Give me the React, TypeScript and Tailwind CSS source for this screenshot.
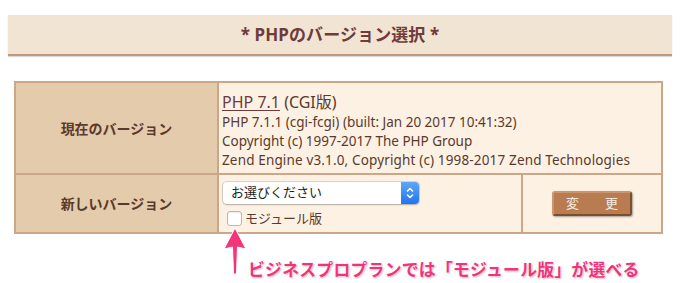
import { useState } from 'react';

const jp = "font-['Noto_Sans','Noto_Sans_CJK_JP',sans-serif]";

export default function App() {
  const [modular, setModular] = useState(false);

  return (
    <div className={`relative w-[680px] h-[283px] bg-white overflow-hidden ${jp}`}>
      {/* Title band */}
      <div className="pt-[15px] px-[8px]">
        <div className="h-[41px] flex items-center justify-center bg-[#f1e4d3] border-b-2 border-[#bf9b7c] shadow-[0_1px_1px_rgba(0,0,0,0.15)]">
          <h1 className="text-[17px] font-bold text-[#6f3b3b] tracking-[0.1px]">* PHPのバージョン選択 *</h1>
        </div>
      </div>

      {/* Version table */}
      <div className="mt-[25px] ml-[14px] w-[649px] grid grid-cols-[201px_302px_138px] border-2 border-[#c9a788] bg-[#c9a788] gap-[2px]">
        <div className="h-[90px] bg-[#e4cbab] flex items-center justify-center text-[14px] font-semibold text-[#5a3a2c]">
          現在のバージョン
        </div>
        <div className="col-span-2 bg-[#fdf1e4] pl-[3px] pt-[8px] text-[13.5px] leading-[19px] text-[#5a3a2c]">
          <div className="text-[16px] leading-[22px]">
            <span className="underline text-[#6f3b3b] decoration-1 underline-offset-2">PHP 7.1</span> (CGI版)
          </div>
          <div>PHP 7.1.1 (cgi-fcgi) (built: Jan 20 2017 10:41:32)</div>
          <div>Copyright (c) 1997-2017 The PHP Group</div>
          <div className="tracking-[0.15px]">Zend Engine v3.1.0, Copyright (c) 1998-2017 Zend Technologies</div>
        </div>

        <div className="h-[57px] bg-[#e4cbab] flex items-center justify-center text-[14px] font-semibold text-[#5a3a2c]">
          新しいバージョン
        </div>
        <div className="bg-[#fdf1e4] pl-[4px] pt-[7px]">
          <div className="w-[196px] h-[22px] flex items-center bg-white rounded-[4px] shadow-[0_0_0_1px_rgba(0,0,0,0.12),0_1px_2px_rgba(0,0,0,0.2)] overflow-hidden">
            <span className="flex-1 pl-[8px] text-[13px] text-[#222]">お選びください</span>
            <span className="w-[18px] h-full bg-gradient-to-b from-[#5ea8f8] to-[#1f74ef] flex items-center justify-center">
              <svg width="8" height="14" viewBox="0 0 8 14" fill="none" stroke="white" strokeWidth="1.6" strokeLinecap="round" strokeLinejoin="round">
                <path d="M1.5 5 L4 2.5 L6.5 5" />
                <path d="M1.5 9 L4 11.5 L6.5 9" />
              </svg>
            </span>
          </div>
          <label className="mt-[5px] flex items-center gap-[3px] text-[13px] text-[#5a3a2c] cursor-pointer">
            <input
              type="checkbox"
              checked={modular}
              onChange={() => setModular(!modular)}
              className="appearance-none w-[15px] h-[15px] ml-[4px] rounded-[3px] bg-white border border-[#b8b8b8] shadow-[inset_0_1px_1px_rgba(0,0,0,0.08)]"
            />
            モジュール版
          </label>
        </div>
        <div className="bg-[#fdf1e4] flex items-center justify-center">
          <button className="w-[80px] h-[25px] whitespace-nowrap rounded-[3px] bg-[#b87c50] border-2 border-[#7d4d2d] border-t-[#c99670] border-l-[#c99670] shadow-[1px_1px_2px_rgba(0,0,0,0.35)] text-[13px] text-[#f6ebe0]">
            変　　更
          </button>
        </div>
      </div>

      {/* Annotation arrow */}
      <svg className="absolute left-[222px] top-[226px]" width="26" height="50" viewBox="0 0 26 50">
        <path d="M13 2 L24 23 L15.5 21 L14.5 48 L11.5 48 L10.5 21 L2 23 Z" fill="#f5357a" stroke="white" strokeWidth="1" strokeLinejoin="round" />
      </svg>
      <div className="absolute left-[248px] top-[257px] text-[16.8px] font-bold text-[#f0347a] tracking-[0.3px] [text-shadow:0_0_2px_white,1px_1px_2px_rgba(120,0,40,0.35)]">
        ビジネスプロプランでは「モジュール版」が選べる
      </div>
    </div>
  );
}
